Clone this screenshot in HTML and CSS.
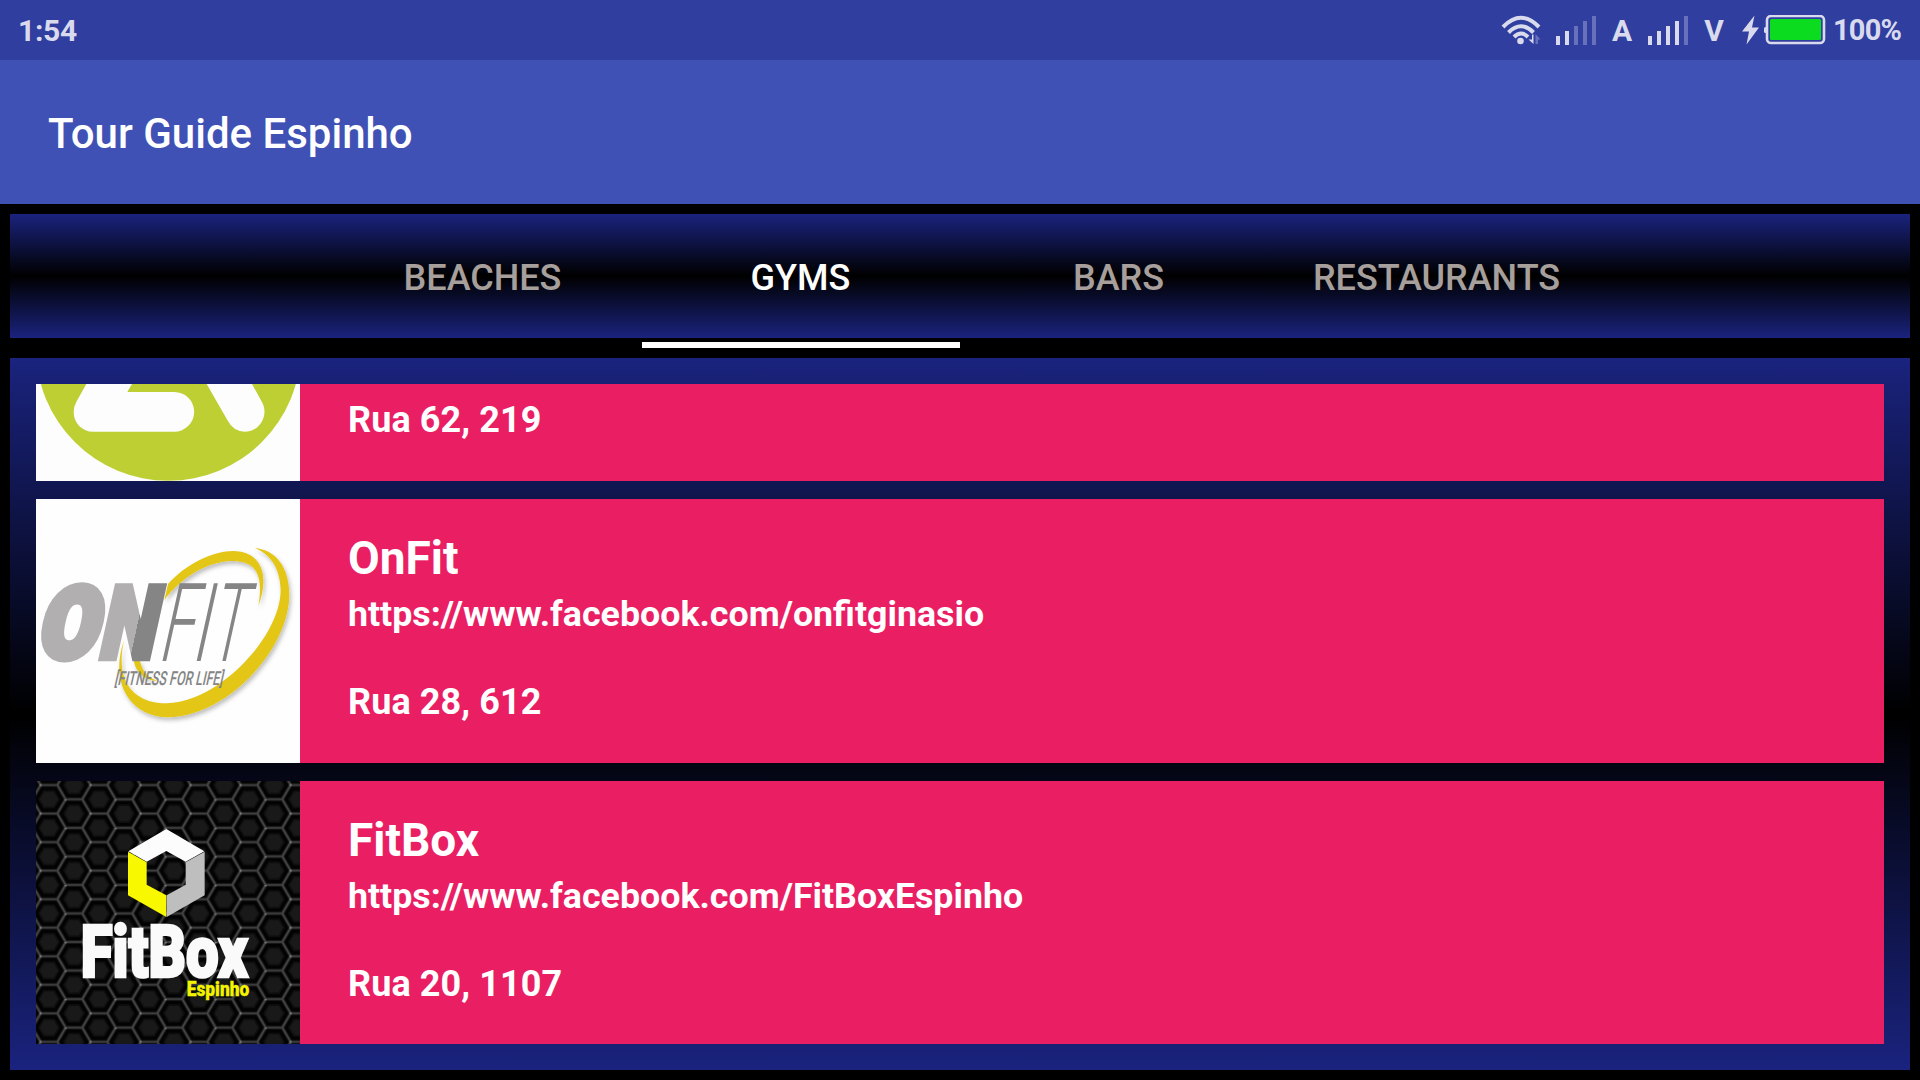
FILE: index.html
```html
<!DOCTYPE html>
<html lang="en">
<head>
<meta charset="utf-8">
<title>Tour Guide Espinho</title>
<link rel="stylesheet" href="styles.css">
</head>
<body>
<header class="status">
  <span class="clock">1:54</span>
  <div class="indicators">
    <svg class="wifi" viewBox="0 0 40 30" width="40" height="30">
      <g fill="none" stroke="#d9daee" stroke-width="4">
        <path d="M2 12Q20 -6.500 38 12"/><path d="M7.500 17.500Q20 5 32.500 17.500"/><path d="M13 22Q20 15 27 22"/>
      </g>
      <circle cx="19.500" cy="26" r="3.300" fill="#d9daee"/>
      <path d="M32.500 19.500V29L27.500 24.500H31V19.500Z" fill="#d9daee"/>
      <path d="M34.500 29V19L39.500 24.500H37V29Z" fill="#6871bb"/>
    </svg>
    <svg class="signal" viewBox="0 0 40 29" width="40" height="29">
      <path d="M0 20h4v9H0zM9 15h4v14H9z" fill="#d9daee"/><path d="M18 10h4v19h-4zM27 5h4v24h-4zM36 0h4v29h-4z" fill="#6871bb"/>
    </svg>
    <span class="carrier">A</span>
    <svg class="signal" viewBox="0 0 40 29" width="40" height="29">
      <path d="M0 20h4v9H0zM9 15h4v14H9zM18 10h4v19h-4zM27 5h4v24h-4z" fill="#d9daee"/><path d="M36 0h4v29h-4z" fill="#6871bb"/>
    </svg>
    <span class="carrier">V</span>
    <svg class="battery" viewBox="0 0 84 30" width="84" height="30">
      <path d="M12.500 0.500L0 16.500H7L4.500 29.500L17 12.500H10Z" fill="#d9daee"/>
      <rect x="22" y="12" width="4" height="6" rx="1.500" fill="#d9daee"/>
      <rect x="25" y="1" width="57" height="27" rx="4" fill="none" stroke="#d9daee" stroke-width="2.600"/>
      <rect x="28" y="4" width="51" height="21" rx="1.500" fill="#0cdc20"/>
    </svg>
    <span class="percent">100%</span>
  </div>
</header>
<div class="toolbar"><h1>Tour Guide Espinho</h1></div>
<main>
  <nav class="tabs">
    <a class="tab">BEACHES</a>
    <a class="tab active">GYMS</a>
    <a class="tab">BARS</a>
    <a class="tab">RESTAURANTS</a>
  </nav>
  <section class="panel">
    <article class="card partial">
      <svg class="thumb" viewBox="108 132 792 291" preserveAspectRatio="none">
        <rect x="108" y="132" width="792" height="291" fill="#fdfdfd"/>
        <circle cx="505" cy="25.500" r="397" fill="#bdcf32"/>
        <path d="M259 132L230 184Q221 200 221 216A58 58 0 0 0 279 275H523A59.500 59.500 0 0 0 523 156H382L396 132ZM620 132L682 240Q700 275 735 275A60 60 0 0 0 787 188L756 132Z" fill="#fdfdfd"/>
      </svg>
      <div class="info"><p class="address">Rua 62, 219</p></div>
    </article>
    <article class="card">
      <svg class="thumb" viewBox="18 27 792 792">
        <defs>
          <linearGradient id="nFill" gradientUnits="userSpaceOnUse" x1="0" y1="0" x2="400" y2="0">
            <stop offset="0.745" stop-color="#b1afb0"/><stop offset="0.745" stop-color="#858585"/>
          </linearGradient>
          <filter id="soft" x="-20%" y="-20%" width="140%" height="140%"><feDropShadow dx="5" dy="9" stdDeviation="7" flood-color="#000" flood-opacity="0.25"/></filter>
        </defs>
        <rect x="18" y="27" width="792" height="792" fill="#fefefe"/>
        <g fill="#e3c619" filter="url(#soft)">
          <path d="M675 174C735 180 778 228 778 315C776 480 590 682 410 682C310 680 235 590 282 450C252 585 320 640 410 640C565 638 752 440 752 300C750 238 725 195 675 174Z"/>
          <path d="M403 330L414 282C470 220 550 183 610 183C690 184 722 250 685 348C701 255 680 213 605 213C530 215 455 262 403 330Z"/>
          <path d="M311 512H330C336 540 350 560 382 573C343 570 318 548 311 512Z"/>
        </g>
        <g transform="translate(0 514) skewX(-12.500)" class="logo-heavy">
          <text x="16" y="-12" font-size="292" textLength="176" lengthAdjust="spacingAndGlyphs" fill="#b1afb0" stroke="#b1afb0" stroke-width="27">O</text>
          <text x="198" y="-9" font-size="302" textLength="167" lengthAdjust="spacingAndGlyphs" fill="url(#nFill)" stroke="url(#nFill)" stroke-width="19">N</text>
        </g>
        <g transform="translate(0 514) skewX(-12.500)" class="logo-light" fill="#858585">
          <text x="381" y="0" font-size="328" textLength="103" lengthAdjust="spacingAndGlyphs">F</text>
          <text x="480" y="0" font-size="328" textLength="52" lengthAdjust="spacingAndGlyphs">I</text>
          <text x="530" y="0" font-size="328" textLength="104" lengthAdjust="spacingAndGlyphs">T</text>
        </g>
        <text transform="translate(252 584) skewX(-12.500)" class="logo-tag" font-size="58" textLength="325" lengthAdjust="spacingAndGlyphs" fill="#858585">[FITNESS FOR LIFE]</text>
      </svg>
      <div class="info">
        <h2>OnFit</h2>
        <p class="link">https://www.facebook.com/onfitginasio</p>
        <p class="address">Rua 28, 612</p>
      </div>
    </article>
    <article class="card last">
      <svg class="thumb" viewBox="18 18 792 789" preserveAspectRatio="none">
        <defs>
          <pattern id="mesh" patternUnits="userSpaceOnUse" x="57" y="73" width="150" height="85.600">
            <rect width="150" height="85.600" fill="#020202"/>
            <g fill="none" stroke="#1c1c1c" stroke-width="11"><path d="M25 42.800L50 0H100L125 42.800L100 85.600H50ZM0 42.800H25M125 42.800H150"/></g>
            <g fill="none" stroke="#444" stroke-width="5"><path d="M25 42.800L50 0H100L125 42.800L100 85.600H50ZM0 42.800H25M125 42.800H150"/></g>
            <g fill="#191919" stroke="#0e0e0e" stroke-width="5">
              <path d="M45 42.800L60 18H90L105 42.800L90 68H60Z"/>
              <path d="M-15 -25H15L30 0L15 25H-15ZM-15 60.600H15L30 85.600L15 110H-15ZM165 -25H135L120 0L135 25H165ZM165 60.600H135L120 85.600L135 110H165Z"/>
            </g>
            <g fill="#777"><circle cx="50" cy="1" r="3.500"/><circle cx="125" cy="42.800" r="3.500"/></g>
          </pattern>
        </defs>
        <rect x="18" y="18" width="792" height="789" fill="url(#mesh)"/>
        <path d="M409 162L523 229L467 260L409 228L350 260L295 229Z" fill="#fcfcfc"/>
        <path d="M294 230L350 262V329L409 361V426L294 361Z" fill="#f8f800"/>
        <path d="M524 230L467 262V329L410 361V426L524 361Z" fill="#bebebe"/>
        <g class="logo-heavy">
          <text x="152" y="607" font-size="215" textLength="502" lengthAdjust="spacingAndGlyphs" fill="#fafafa" stroke="#fafafa" stroke-width="8">FitBox</text>
          <text x="470" y="664" font-size="59" textLength="188" lengthAdjust="spacingAndGlyphs" fill="#f4f400" stroke="#f4f400" stroke-width="1">Espinho</text>
        </g>
      </svg>
      <div class="info">
        <h2>FitBox</h2>
        <p class="link">https://www.facebook.com/FitBoxEspinho</p>
        <p class="address">Rua 20, 1107</p>
      </div>
    </article>
  </section>
</main>
</body>
</html>
```
FILE: styles.css
```css
* { box-sizing: border-box; margin: 0; padding: 0; }
body {
  width: 1920px;
  height: 1080px;
  overflow: hidden;
  background: #000;
  color: #fff;
  font-family: Roboto, sans-serif;
}
.status {
  height: 60px;
  padding: 0 19px 0 18px;
  display: flex;
  justify-content: space-between;
  align-items: center;
  background: #303e9f;
  color: #d9daee;
  font-size: 30px;
  font-weight: 700;
}
.clock { letter-spacing: -0.3px; }
.indicators { display: flex; align-items: center; }
.signal { margin-left: 15px; }
.carrier { width: 52px; text-align: center; }
.carrier + .signal { margin-left: 0; }
.battery { margin-left: 2px; }
.percent { margin-left: 7px; width: 68px; font-size: 29px; letter-spacing: -0.8px; }
.toolbar {
  height: 144px;
  padding-left: 48px;
  display: flex;
  align-items: center;
  background: #3f51b5;
}
.toolbar h1 { font-size: 42px; font-weight: 500; padding-top: 2px; }
main { padding: 10px; }
.tabs {
  height: 124px;
  display: flex;
  justify-content: center;
  background: linear-gradient(#1a237e, #000 50%, #1a237e);
}
.tab {
  width: 318px;
  height: 134px;
  padding-right: 1px;
  display: flex;
  align-items: center;
  justify-content: center;
  flex: none;
  border-bottom: 6px solid transparent;
  color: #a69f9b;
  font-size: 36px;
  font-weight: 500;
}
.tab.active { color: #fff; border-bottom-color: #fff; }
.panel {
  height: 712px;
  margin-top: 20px;
  padding: 26px;
  display: flex;
  flex-direction: column;
  gap: 18px;
  background: linear-gradient(#1a237e, #000 50%, #1a237e);
}
.card { height: 264px; display: flex; background: #e91e63; }
.card.last { height: 263px; }
.card.partial { height: 97px; }
.thumb { width: 264px; height: 100%; flex: none; display: block; }
.info { padding: 31px 0 0 48px; font-weight: 700; }
.info h2 { font-size: 46px; line-height: 56px; }
.info p { font-size: 36px; line-height: 42px; }
.info .link { margin-top: 7px; font-size: 35.75px; }
.address { margin-top: 46px; letter-spacing: 0.1px; }
.partial .info { padding-top: 15px; }
.partial .address { margin-top: 0; }
.logo-heavy { font-family: Roboto, sans-serif; font-weight: 900; }
.logo-light { font-family: Roboto, sans-serif; font-weight: 300; }
.logo-tag { font-family: Roboto, sans-serif; font-weight: 500; }
```
